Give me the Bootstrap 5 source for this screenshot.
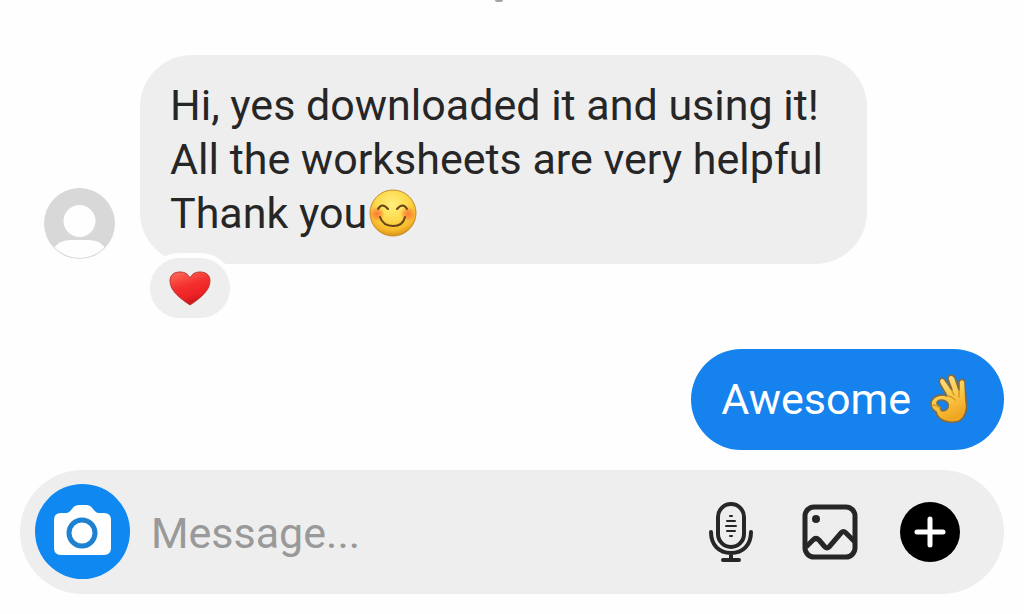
<!DOCTYPE html>
<html lang="en">
<head>
<meta charset="utf-8">
<meta name="viewport" content="width=device-width, initial-scale=1">
<title>Chat</title>
<link href="https://cdn.jsdelivr.net/npm/bootstrap@5.3.0/dist/css/bootstrap.min.css" rel="stylesheet">
<style>
body{font-family:Roboto,"Noto Sans",sans-serif;font-size:43px;line-height:54px;color:#262626;background:#fefefe}
.chat{padding:0 20px 20px 20px}
.divider-mark{width:8px;height:2px;margin:0 auto 53px;left:-13px;background:#a3a3a3;border-radius:0 0 4px 4px}
.incoming{padding-left:24px;gap:25px}
.avatar{width:71px;height:71px;margin-bottom:5px}
.bubble{background:#eee;border-radius:52px;padding:23px 44px 24px 30px}
.bubble-own{background:#1582ee;color:#fff;border-radius:51px;padding:23px 33px 24px 30px;gap:18px}
.outgoing{margin-top:85px}
.reaction{left:5px;top:198px;width:90px;height:70px;background:#eee;border:5px solid #fefefe;border-radius:35px}
.composer{background:#eee;border-radius:62px;margin-top:20px;padding:14px 44px 15px 15px}
.camera{width:95px;height:95px;background:#0f88f2}
.message,.message:focus{background:transparent;color:#262626;font-size:43px;line-height:54px;padding:2px 0 0 21px;box-shadow:none}
.message::placeholder{color:#999;opacity:1}
.tools{gap:42px}
.tool{color:#262626}
svg{display:block;flex-shrink:0}
.emoji{display:inline-block;vertical-align:-9px;margin-left:2px}
</style>
</head>
<body>
<main class="chat d-flex flex-column">
  <div class="divider-mark position-relative" aria-hidden="true"></div>

  <div class="incoming d-flex align-items-end">
    <svg class="avatar" viewBox="0 0 71 71" role="img" aria-label="Profile picture">
      <defs><clipPath id="face"><circle cx="35.500" cy="35.500" r="34.500"/></clipPath></defs>
      <circle cx="35.500" cy="35.500" r="35.500" fill="#d8d8d8"/>
      <circle cx="35.500" cy="33" r="16" fill="#fefefe"/>
      <path clip-path="url(#face)" fill="#fefefe" d="M9 62Q14 52 26 52H45Q57 52 62 62V72H9Z"/>
    </svg>
    <div class="bubble position-relative">
      Hi, yes downloaded it and using it!<br>
      All the worksheets are very helpful<br>
      Thank you<svg class="emoji" width="48" height="48" viewBox="0 0 48 48" role="img" aria-label="Smiling face">
        <defs>
          <radialGradient id="skin" cx=".48" cy=".32" r=".7"><stop offset="0" stop-color="#fff07c"/><stop offset=".5" stop-color="#fed94c"/><stop offset=".8" stop-color="#f6b92b"/><stop offset="1" stop-color="#d78a12"/></radialGradient>
          <radialGradient id="blush"><stop offset="0" stop-color="#fa7036" stop-opacity=".9"/><stop offset=".5" stop-color="#fa7c36" stop-opacity=".6"/><stop offset="1" stop-color="#fa8c36" stop-opacity="0"/></radialGradient>
        </defs>
        <circle cx="24" cy="24" r="23" fill="url(#skin)" stroke="#c58a2a" stroke-width="1"/>
        <circle cx="8" cy="25" r="8" fill="url(#blush)"/><circle cx="39" cy="25" r="8" fill="url(#blush)"/>
        <g fill="none" stroke="#664416" stroke-width="2" stroke-linecap="round"><path d="M9 20Q13 13 19 20M28 20Q34 13 38 20"/><path d="M11 28Q14 37 24 37Q34 37 36 28"/></g>
      </svg>
      <div class="reaction position-absolute d-flex align-items-center justify-content-center">
        <svg width="42" height="36" viewBox="0 0 42 36" role="img" aria-label="Heart">
          <defs><linearGradient id="heart" x1=".3" y1="0" x2=".7" y2="1"><stop offset="0" stop-color="#fb6254"/><stop offset=".4" stop-color="#f42f2d"/><stop offset=".7" stop-color="#ed2225"/><stop offset="1" stop-color="#b91018"/></linearGradient></defs>
          <path fill="url(#heart)" stroke="#b93c36" stroke-width="1" d="M21 35C12 29 1 21 1 11C1 5 5 2 11 2C16 2 19 4 21 8C23 4 26 2 31 2C37 2 41 5 41 11C41 21 30 29 21 35Z"/>
        </svg>
      </div>
    </div>
  </div>

  <div class="outgoing d-flex justify-content-end">
    <div class="bubble-own d-flex align-items-center">
      <span>Awesome</span>
      <svg width="42" height="50" viewBox="0 0 42 50" role="img" aria-label="OK hand">
        <defs><linearGradient id="hand" x1="0" y1="0" x2=".4" y2="1"><stop offset="0" stop-color="#ffe49a"/><stop offset=".55" stop-color="#fccb4b"/><stop offset="1" stop-color="#efa620"/></linearGradient></defs>
        <path fill="url(#hand)" fill-rule="evenodd" stroke="#806a45" stroke-width="1.600" stroke-linejoin="round" d="M18 22L11 10C9 5 13 2 16 6L23 16L19 5C19 0 24 0 26 4L30 16L30 8C31 4 37 5 36 10L37 27C38 32 38 36 36 40C34 46 28 49 20 48C12 47 8 43 7 38C2 35 1 30 3 26C6 21 13 20 18 22ZM12 26C8 26 7 29 9 31C12 32 10 36 14 37C18 37 20 33 19 30C18 27 15 26 12 26Z"/>
        <path fill="none" stroke="#d69a2b" stroke-width="1.500" stroke-linecap="round" d="M18 22Q23 22 26 26M23 17L25 21M30 17V23M3 31Q8 31 11 34"/>
      </svg>
    </div>
  </div>

  <form class="composer d-flex align-items-center" onsubmit="return false">
    <button type="button" class="camera btn border-0 rounded-circle p-0 d-flex align-items-center justify-content-center flex-shrink-0" aria-label="Camera">
      <svg width="57" height="55" viewBox="0 0 57 55">
        <path fill="#fff" d="M7 9H12C15 9 16 7 18 5C20 2 22 1 25 1H32C35 1 37 2 39 5C41 7 42 9 45 9H50Q57 9 57 16V44Q57 51 50 51H7Q0 51 0 44V16Q0 9 7 9Z"/>
        <circle cx="28" cy="29" r="13" fill="none" stroke="#1e82d2" stroke-width="5"/>
      </svg>
    </button>
    <input class="message form-control border-0 flex-fill" type="text" placeholder="Message..." aria-label="Message">
    <div class="tools d-flex align-items-center flex-shrink-0">
      <button type="button" class="tool btn border-0 p-0" aria-label="Voice message">
        <svg width="56" height="62" viewBox="0 0 56 62" fill="none" stroke="currentColor" stroke-width="4" stroke-linecap="round">
          <rect x="14" y="3" width="26" height="43" rx="13"/>
          <path d="M7 31C7 44 15 52 27 52S47 44 47 31M27 52V58M19 59H35"/>
          <path stroke-width="2" d="M26 15H28M23 20H31M22 25H32M23 30H31M26 35H28"/>
        </svg>
      </button>
      <button type="button" class="tool btn border-0 p-0" aria-label="Gallery">
        <svg width="56" height="56" viewBox="0 0 56 56" fill="none" stroke="currentColor" stroke-width="5" stroke-linejoin="round">
          <rect x="3" y="3" width="50" height="50" rx="9"/><circle cx="14" cy="15" r="4" fill="currentColor" stroke="none"/>
          <path d="M4 43L11 36Q14 33 17 36L23 43Q25 45 27 43L39 29Q41 26 44 29L53 38"/>
        </svg>
      </button>
      <button type="button" class="tool btn border-0 p-0" aria-label="More">
        <svg width="60" height="60" viewBox="0 0 60 60"><circle cx="30" cy="30" r="30" fill="#000"/><path d="M17 30H43M30 17V43" stroke="#fff" stroke-width="5" stroke-linecap="round"/></svg>
      </button>
    </div>
  </form>
</main>
<script src="https://cdn.jsdelivr.net/npm/bootstrap@5.3.0/dist/js/bootstrap.bundle.min.js"></script>
</body>
</html>
